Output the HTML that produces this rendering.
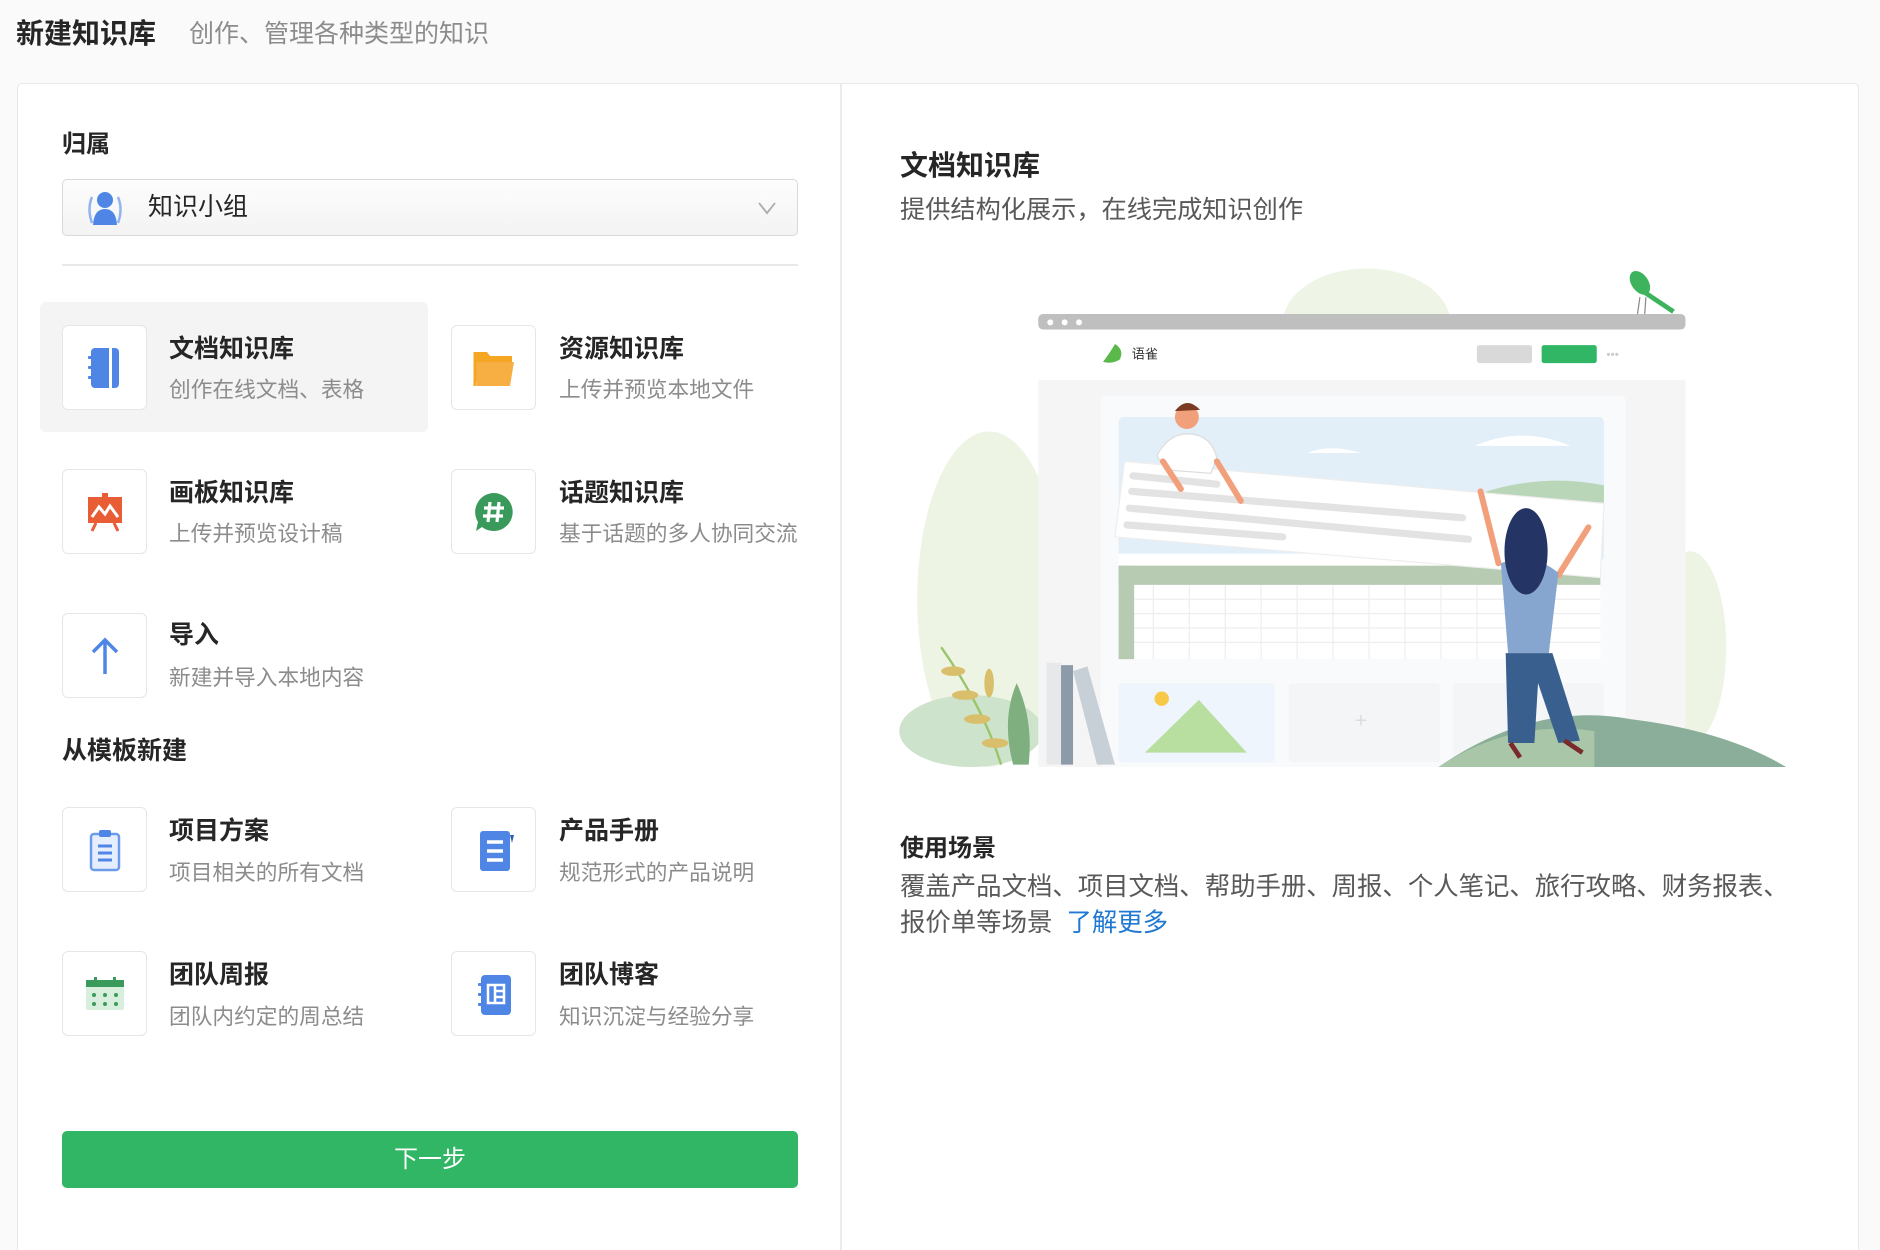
<!DOCTYPE html>
<html style="width:1880px;height:1250px;overflow:hidden"><head><meta charset="utf-8">
<style>
*{margin:0;padding:0;box-sizing:border-box}
body{width:1880px;height:1250px;background:#fafafa;font-family:"Liberation Sans","Noto Sans CJK SC",sans-serif;color:#262626;position:relative;overflow:hidden}
.a{position:absolute;white-space:nowrap}
.box{position:absolute;width:85px;height:85px;border:1.5px solid #e6e6e6;border-radius:6px;background:#fff;display:flex;align-items:center;justify-content:center}
.t{position:absolute;font-size:25px;font-weight:600;line-height:34px;color:#262626;white-space:nowrap}
.d{position:absolute;font-size:21.7px;line-height:30px;color:#8c8c8c;white-space:nowrap}
</style></head><body>
<div class="a" style="left:16px;top:14px;font-size:28px;line-height:40px;font-weight:600">新建知识库</div>
<div class="a" style="left:189px;top:16px;font-size:25px;line-height:36px;color:#8c8c8c">创作、管理各种类型的知识</div>

<div class="a" style="left:17px;top:83px;width:1842px;height:1167px;background:#fff;border:1.5px solid #e8e8e8;border-bottom:none;border-radius:5px 5px 0 0"></div>
<div class="a" style="left:840px;top:84px;width:2px;height:1166px;background:#ececec"></div>

<div class="a" style="left:62px;top:128px;font-size:24px;line-height:34px;font-weight:600">归属</div>
<div class="a" style="left:62px;top:179px;width:736px;height:57px;border:1.5px solid #d9d9d9;border-radius:5px;background:linear-gradient(#fdfdfd,#f3f3f3)"></div>
<svg class="a" style="left:84px;top:189px" width="42" height="38" viewBox="0 0 42 38">
<path d="M8 8 Q3 20 8 34" stroke="#8fb4ef" stroke-width="2.5" fill="none"/><path d="M34 8 Q39 20 34 34" stroke="#8fb4ef" stroke-width="2.5" fill="none"/>
<circle cx="21" cy="11" r="8" fill="#4f86e6"/><path d="M9 36 Q10 20 21 20 Q32 20 33 36 Z" fill="#4f86e6"/></svg>
<div class="a" style="left:148px;top:190px;font-size:25px;line-height:34px">知识小组</div>
<svg class="a" style="left:757px;top:201px" width="20" height="14"><path d="M2 2 L10 12 L18 2" stroke="#aaa" stroke-width="1.8" fill="none"/></svg>
<div class="a" style="left:62px;top:264px;width:736px;height:2px;background:#e8e8e8"></div>

<div class="a" style="left:40px;top:302px;width:388px;height:130px;background:#f4f4f4;border-radius:6px"></div>

<div class="box" style="left:62px;top:325px"><svg width="40" height="46" viewBox="0 0 40 46"><rect x="6" y="3" width="28" height="40" rx="4" fill="#4f86e6"/><rect x="24" y="3" width="3" height="40" fill="#fff"/><rect x="3" y="11" width="5" height="3" rx="1" fill="#4f86e6"/><rect x="3" y="21" width="5" height="3" rx="1" fill="#4f86e6"/><rect x="3" y="31" width="5" height="3" rx="1" fill="#4f86e6"/></svg></div>
<div class="t" style="left:169px;top:332px">文档知识库</div><div class="d" style="left:169px;top:375px">创作在线文档、表格</div>
<div class="box" style="left:451px;top:325px"><svg width="44" height="40" viewBox="0 0 44 40"><path d="M3 4 h12 l3 4 h22 v8 H3z" fill="#f5a623"/><path d="M3 14 h39 l-4 24 H5z" fill="#f7ae42"/><path d="M3 4 v34" stroke="#f5a623" stroke-width="3"/></svg></div>
<div class="t" style="left:559px;top:332px">资源知识库</div><div class="d" style="left:559px;top:375px">上传并预览本地文件</div>
<div class="box" style="left:62px;top:469px"><svg width="42" height="42" viewBox="0 0 42 42"><rect x="4" y="6" width="34" height="26" fill="#e85d33"/><rect x="18" y="2" width="6" height="6" fill="#e85d33"/><path d="M8 26 L15 16 L21 23 L26 15 L34 26" stroke="#fff" stroke-width="3" fill="none"/><path d="M12 32 L8 40 M30 32 L34 40" stroke="#e85d33" stroke-width="3"/></svg></div>
<div class="t" style="left:169px;top:476px">画板知识库</div><div class="d" style="left:169px;top:519px">上传并预览设计稿</div>
<div class="box" style="left:451px;top:469px"><svg width="44" height="44" viewBox="0 0 44 44"><path d="M22 3 a19 19 0 1 1 -12 34 L4 41 L6 32 A19 19 0 0 1 22 3z" fill="#3a9a5b"/><path d="M18 12 L16 32 M27 12 L25 32 M12 18 H32 M11 26 H31" stroke="#fff" stroke-width="3.2"/></svg></div>
<div class="t" style="left:559px;top:476px">话题知识库</div><div class="d" style="left:559px;top:519px">基于话题的多人协同交流</div>
<div class="box" style="left:62px;top:613px"><svg width="40" height="44" viewBox="0 0 40 44"><path d="M20 40 V6 M8 18 L20 6 L32 18" stroke="#4f86e6" stroke-width="3.5" fill="none"/></svg></div>
<div class="t" style="left:169px;top:618px">导入</div><div class="d" style="left:169px;top:663px">新建并导入本地内容</div>

<div class="a" style="left:62px;top:734px;font-size:25px;line-height:34px;font-weight:600">从模板新建</div>

<div class="box" style="left:62px;top:807px"><svg width="40" height="46" viewBox="0 0 40 46"><rect x="6" y="7" width="28" height="36" rx="3" fill="#e4eefc" stroke="#6b9bea" stroke-width="2.5"/><rect x="14" y="3" width="12" height="7" rx="2" fill="#4f86e6"/><path d="M13 19 H27 M13 26 H27 M13 33 H27" stroke="#4f86e6" stroke-width="3"/></svg></div>
<div class="t" style="left:169px;top:814px">项目方案</div><div class="d" style="left:169px;top:858px">项目相关的所有文档</div>
<div class="box" style="left:451px;top:807px"><svg width="40" height="46" viewBox="0 0 40 46"><rect x="6" y="4" width="30" height="40" rx="3" fill="#4f86e6"/><path d="M36 8 L40 8 L38 16" fill="#2c5fb8"/><path d="M13 15 H29 M13 24 H29 M13 33 H29" stroke="#fff" stroke-width="3.5"/></svg></div>
<div class="t" style="left:559px;top:814px">产品手册</div><div class="d" style="left:559px;top:858px">规范形式的产品说明</div>
<div class="box" style="left:62px;top:951px"><svg width="44" height="40" viewBox="0 0 44 40"><rect x="3" y="8" width="38" height="28" rx="2" fill="#d9efdd"/><rect x="3" y="6" width="38" height="7" fill="#3a9a5b"/><rect x="11" y="3" width="3" height="6" fill="#3a9a5b"/><rect x="30" y="3" width="3" height="6" fill="#3a9a5b"/><g fill="#3a9a5b"><circle cx="11" cy="21" r="2"/><circle cx="22" cy="21" r="2"/><circle cx="33" cy="21" r="2"/><circle cx="11" cy="30" r="2"/><circle cx="22" cy="30" r="2"/><circle cx="33" cy="30" r="2"/></g></svg></div>
<div class="t" style="left:169px;top:958px">团队周报</div><div class="d" style="left:169px;top:1002px">团队内约定的周总结</div>
<div class="box" style="left:451px;top:951px"><svg width="40" height="46" viewBox="0 0 40 46"><rect x="7" y="4" width="30" height="40" rx="4" fill="#4f86e6"/><rect x="4" y="12" width="6" height="3" rx="1" fill="#4f86e6"/><rect x="4" y="22" width="6" height="3" rx="1" fill="#4f86e6"/><rect x="4" y="32" width="6" height="3" rx="1" fill="#4f86e6"/><rect x="14" y="14" width="16" height="18" fill="none" stroke="#fff" stroke-width="2.5"/><path d="M21 14 V32 M21 20 H30 M21 26 H30" stroke="#fff" stroke-width="2.5"/></svg></div>
<div class="t" style="left:559px;top:958px">团队博客</div><div class="d" style="left:559px;top:1002px">知识沉淀与经验分享</div>

<div class="a" style="left:62px;top:1131px;width:736px;height:57px;background:#31b665;border-radius:5px;color:#fff;font-size:24px;line-height:57px;text-align:center">下一步</div>

<div class="a" style="left:900px;top:147px;font-size:28px;line-height:38px;font-weight:600">文档知识库</div>
<div class="a" style="left:900px;top:193px;font-size:25.2px;line-height:34px;color:#595959">提供结构化展示，在线完成知识创作</div>
<div class="a" style="left:900px;top:832px;font-size:24px;line-height:34px;font-weight:600">使用场景</div>
<div class="a" style="left:900px;top:869px;font-size:25.4px;line-height:36px;color:#595959">覆盖产品文档、项目文档、帮助手册、周报、个人笔记、旅行攻略、财务报表、<br>报价单等场景 &nbsp;<span style="color:#1f78d1">了解更多</span></div>

<svg class="a" style="left:0;top:0" width="1880" height="1250" viewBox="0 0 1568 1043">
<ellipse cx="1140" cy="270" rx="70" ry="46" fill="#eef5e6"/>
<ellipse cx="825" cy="500" rx="60" ry="140" fill="#edf4e4"/>
<ellipse cx="1410" cy="540" rx="30" ry="80" fill="#edf4e4"/>
<ellipse cx="810" cy="610" rx="60" ry="30" fill="#cde3cb"/>
<rect x="866" y="262" width="540" height="13" rx="4" fill="#bfbfbf"/>
<circle cx="876" cy="269" r="2.5" fill="#fff"/><circle cx="888" cy="269" r="2.5" fill="#fff"/><circle cx="900" cy="269" r="2.5" fill="#fff"/>
<rect x="866" y="275" width="540" height="42" fill="#fff"/>
<path d="M930 287 Q938 292 934 300 Q928 304 920 302 Q926 294 930 287z" fill="#5bb84b"/>
<text x="944" y="299" font-size="11" fill="#333" font-family="Noto Sans CJK SC,sans-serif">语雀</text>
<rect x="1232" y="288" width="46" height="15" rx="2" fill="#d9d9d9"/>
<rect x="1286" y="288" width="46" height="15" rx="2" fill="#31b665"/>
<text x="1340" y="299" font-size="10" fill="#ccc">•••</text>
<rect x="866" y="317" width="540" height="323" fill="#f5f5f5"/>
<rect x="918" y="330" width="438" height="310" rx="4" fill="#f8fafc"/>
<rect x="933" y="348" width="405" height="120" rx="4" fill="#e2eff8"/>
<path d="M1240 410 Q1290 395 1338 405 L1338 420 L1240 420z" fill="#b9d6b8"/>
<rect x="933" y="462" width="402" height="88" fill="#fff"/>
<rect x="933" y="472" width="402" height="16" fill="#b6cbb1"/>
<rect x="933" y="472" width="13" height="78" fill="#b6cbb1"/>
<g stroke="#eee" stroke-width="1"><path d="M946 500 H1335 M946 512 H1335 M946 524 H1335 M946 536 H1335"/><path d="M962 488 V550 M992 488 V550 M1022 488 V550 M1052 488 V550 M1082 488 V550 M1112 488 V550 M1142 488 V550 M1172 488 V550 M1202 488 V550 M1232 488 V550 M1262 488 V550 M1292 488 V550"/></g>
<path d="M938 385 L1338 420 L1335 482 L930 448z" fill="#fff" stroke="#eee"/>
<path d="M945 397 L1015 404 M944 410 L1220 432 M942 424 L1225 450 M940 438 L1070 448" stroke="#e3e3e3" stroke-width="6" stroke-linecap="round"/>
<path d="M1090 378 Q1110 370 1135 378z" fill="#fff"/><path d="M1230 372 Q1270 355 1310 372z" fill="#fff"/>
<circle cx="990" cy="348" r="10" fill="#f2a07b"/><path d="M980 343 Q990 330 1001 342z" fill="#7a3b22"/>
<path d="M965 380 Q975 362 990 362 Q1010 362 1015 382 L1010 395 L972 392z" fill="#fff" stroke="#ddd"/>
<path d="M970 385 L985 408 M1015 385 L1035 418" stroke="#f2a07b" stroke-width="5" stroke-linecap="round"/>
<rect x="933" y="570" width="130" height="66" rx="3" fill="#eef5fc"/>
<circle cx="969" cy="583" r="6" fill="#f7c948"/>
<path d="M955 628 L1000 584 L1040 628z" fill="#b9dfa0"/>
<rect x="1075" y="570" width="126" height="66" rx="3" fill="#f3f5f7"/><text x="1130" y="607" font-size="18" fill="#ddd">+</text>
<rect x="1212" y="570" width="126" height="66" rx="3" fill="#f3f5f7"/>
<path d="M1200 640 Q1280 585 1360 600 Q1440 610 1490 640z" fill="#8aae99"/>
<path d="M1200 640 Q1260 600 1330 610 L1330 640z" fill="#a9c7a8"/>
<path d="M1235 410 L1250 470 M1325 440 L1300 480" stroke="#f2a07b" stroke-width="5" stroke-linecap="round"/>
<path d="M1252 470 Q1278 460 1300 478 L1292 545 L1258 545z" fill="#86a6cf"/>
<ellipse cx="1273" cy="460" rx="18" ry="36" fill="#243464"/>
<path d="M1256 545 L1295 545 L1318 618 L1300 620 L1283 570 L1280 620 L1258 620z" fill="#395f8e"/>
<path d="M1260 620 L1268 632 M1305 618 L1320 628" stroke="#7a2a2a" stroke-width="4"/>
<ellipse cx="1368" cy="236" rx="7" ry="11" transform="rotate(-35 1368 236)" fill="#3db35e"/><path d="M1372 244 L1396 260" stroke="#3db35e" stroke-width="4"/><path d="M1368 248 L1366 262 M1373 248 L1372 262" stroke="#888" stroke-width="1"/>
<rect x="873" y="553" width="12" height="85" fill="#e6e8ea"/><rect x="885" y="555" width="10" height="83" fill="#8d9aa8"/><path d="M895 560 L907 556 L930 638 L915 638z" fill="#c7d0d7"/>
<path d="M835 638 Q820 590 785 540" stroke="#9cc56b" stroke-width="2" fill="none"/>
<g fill="#d9bf6b"><ellipse cx="795" cy="560" rx="10" ry="4"/><ellipse cx="805" cy="580" rx="11" ry="4"/><ellipse cx="815" cy="600" rx="11" ry="4"/><ellipse cx="825" cy="570" rx="4" ry="12"/><ellipse cx="830" cy="620" rx="11" ry="4"/></g>
<path d="M845 638 Q835 600 848 570 Q862 600 858 638z" fill="#7fae7f"/>
</svg>
</body></html>
